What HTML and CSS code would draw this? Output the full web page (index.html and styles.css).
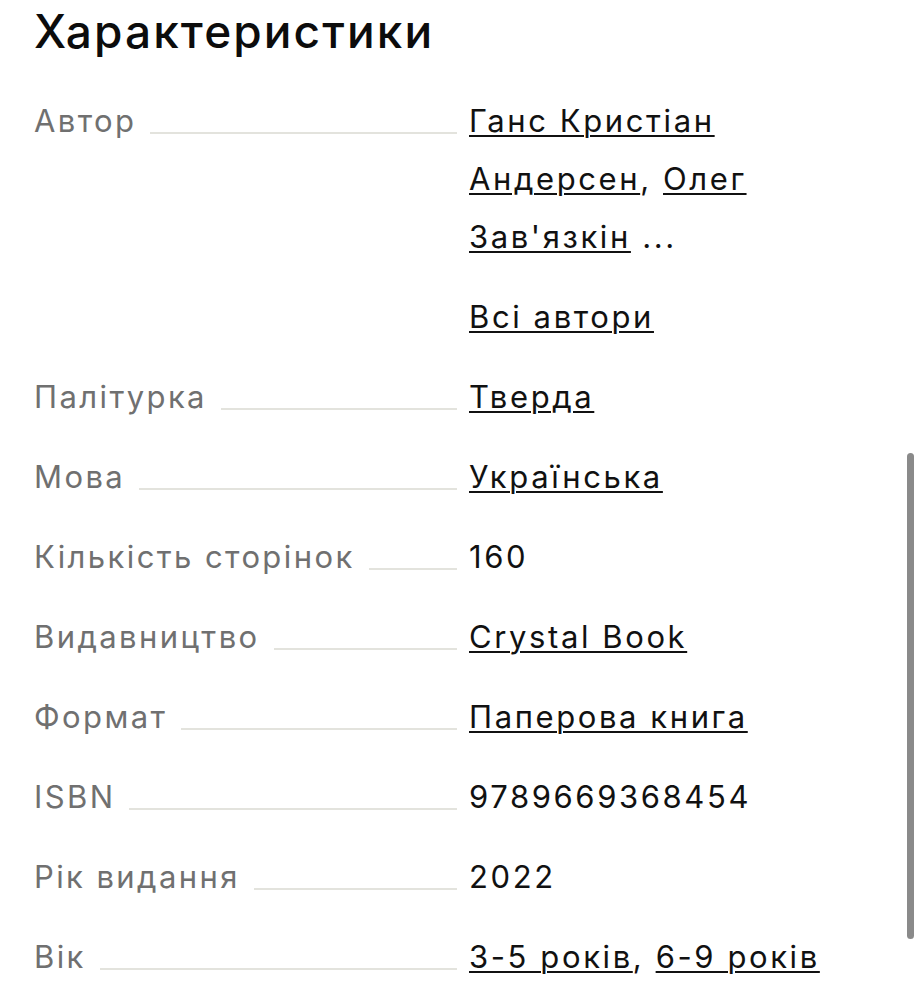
FILE: index.html
```html
<!DOCTYPE html>
<html lang="uk">
<head>
<meta charset="utf-8">
<title>Характеристики</title>
<link rel="stylesheet" href="styles.css">
</head>
<body>
<section class="specs">
  <h2 class="specs-title">Характеристики</h2>
  <div class="spec-row">
    <div class="spec-label"><span>Автор</span><i class="fill"></i></div>
    <div class="spec-value">
      <div class="authors"><a href="#">Ганс Кристіан Андерсен</a>, <a href="#">Олег Зав'язкін</a> ...</div>
      <div class="all-authors"><a href="#">Всі автори</a></div>
    </div>
  </div>
  <div class="spec-row">
    <div class="spec-label"><span>Палітурка</span><i class="fill"></i></div>
    <div class="spec-value"><a href="#">Тверда</a></div>
  </div>
  <div class="spec-row">
    <div class="spec-label"><span>Мова</span><i class="fill"></i></div>
    <div class="spec-value"><a href="#">Українська</a></div>
  </div>
  <div class="spec-row">
    <div class="spec-label"><span>Кількість сторінок</span><i class="fill"></i></div>
    <div class="spec-value">160</div>
  </div>
  <div class="spec-row">
    <div class="spec-label"><span>Видавництво</span><i class="fill"></i></div>
    <div class="spec-value"><a href="#">Crystal Book</a></div>
  </div>
  <div class="spec-row">
    <div class="spec-label"><span>Формат</span><i class="fill"></i></div>
    <div class="spec-value"><a href="#">Паперова книга</a></div>
  </div>
  <div class="spec-row">
    <div class="spec-label"><span>ISBN</span><i class="fill"></i></div>
    <div class="spec-value">9789669368454</div>
  </div>
  <div class="spec-row">
    <div class="spec-label"><span>Рік видання</span><i class="fill"></i></div>
    <div class="spec-value">2022</div>
  </div>
  <div class="spec-row">
    <div class="spec-label"><span>Вік</span><i class="fill"></i></div>
    <div class="spec-value"><a href="#">3-5 років</a>, <a href="#">6-9 років</a></div>
  </div>
</section>
<div class="scrollbar"></div>
</body>
</html>
```

FILE: styles.css
```css
html, body {
  margin: 0;
  padding: 0;
  background: #ffffff;
  overflow: hidden;
}

body {
  font-family: Inter, "Noto Sans", "Liberation Sans", sans-serif;
  color: #111111;
}

.specs {
  padding: 4px 0 0 34px;
}

.specs-title {
  margin: 0 0 33px 0;
  font-size: 46px;
  line-height: 55px;
  font-weight: 500;
  letter-spacing: 2.1px;
  color: #0c0c0c;
}

.spec-row {
  display: grid;
  grid-template-columns: 423px 380px;
  column-gap: 12px;
  font-size: 31px;
  line-height: 58px;
  margin-bottom: 22px;
}

.spec-label {
  display: flex;
  align-items: baseline;
  color: #707070;
  height: 58px;
  letter-spacing: 2.4px;
}

.spec-label span {
  white-space: nowrap;
}

.fill {
  flex: 1;
  height: 2px;
  margin-left: 14px;
  background: #e3e3dd;
  position: relative;
  top: 2px;
}

.spec-value {
  color: #111111;
  letter-spacing: 2.6px;
}

.spec-value a {
  color: #111111;
  text-decoration: underline;
  text-decoration-thickness: 2px;
  text-underline-offset: 3px;
}

.all-authors {
  margin-top: 22px;
}

.scrollbar {
  position: fixed;
  left: 907px;
  top: 453px;
  width: 7px;
  height: 486px;
  border-radius: 4px;
  background: #8a8a8a;
}
```
